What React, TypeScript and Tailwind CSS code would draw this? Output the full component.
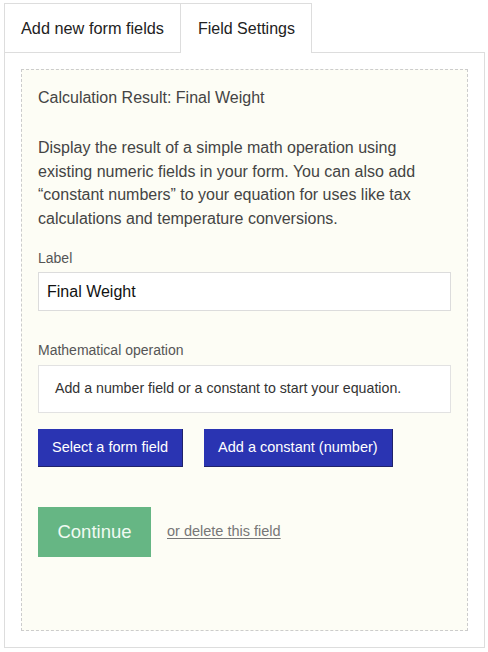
import React from "react";

const tabs = ["Add new form fields", "Field Settings"];

export default function App() {
  return (
    <div className="w-[488px] h-[652px] bg-white pt-[3px] pl-[4px] font-['Liberation_Sans',Arial,sans-serif]">
      {/* tab strip */}
      <div className="flex w-[481px]">
        <div className="h-[50px] px-4 flex items-center border border-[#dddddd] text-[16.3px] text-[#222]">
          {tabs[0]}
        </div>
        <div className="h-[50px] pl-[17px] pr-[16px] flex items-center border-t border-r border-[#dddddd] bg-white text-[16px] text-[#222]">
          {tabs[1]}
        </div>
        <div className="flex-1 border-b border-[#dddddd]" />
      </div>

      {/* panel */}
      <div className="w-[481px] border-x border-b border-[#dddddd] p-4">
        <div className="h-[562px] border border-dashed border-[#cccccc] bg-[#fdfdf5] px-4 pt-4">
          <h3 className="text-[16px] leading-6 text-[#444]">Calculation Result: Final Weight</h3>

          <p className="mt-[26px] text-[16px] leading-[23.5px] text-[#444]">
            Display the result of a simple math operation using existing numeric fields in your form. You can also add
            “constant numbers” to your equation for uses like tax calculations and temperature conversions.
          </p>

          <label className="block mt-[18px] text-[14px] leading-5 text-[#555]">Label</label>
          <input
            readOnly
            value="Final Weight"
            className="mt-[4px] block w-full h-[39px] border border-[#dcdcdc] bg-white px-2 text-[16px] text-[#111] outline-none"
          />

          <div className="mt-[29px] text-[14px] leading-5 text-[#555]">Mathematical operation</div>
          <div className="mt-[5px] h-[48px] border border-[#e2e2e2] bg-white px-4 flex items-center text-[14.2px] text-[#333]">
            Add a number field or a constant to start your equation.
          </div>

          <div className="mt-4 flex gap-[21px]">
            <button className="h-[38px] px-[14px] bg-[#2a34b2] border-r border-b border-[#20236a] text-[14.5px] text-white">
              Select a form field
            </button>
            <button className="h-[38px] px-[14px] bg-[#2a34b2] border-r border-b border-[#20236a] text-[14.5px] text-white">
              Add a constant (number)
            </button>
          </div>

          <div className="mt-10 flex items-center gap-4">
            <button className="h-[50px] w-[113px] bg-[#66b684] text-[18.5px] text-[#f0faf2]">Continue</button>
            <a href="#" className="text-[14.5px] text-[#777] underline underline-offset-2">
              or delete this field
            </a>
          </div>
        </div>
      </div>
    </div>
  );
}
